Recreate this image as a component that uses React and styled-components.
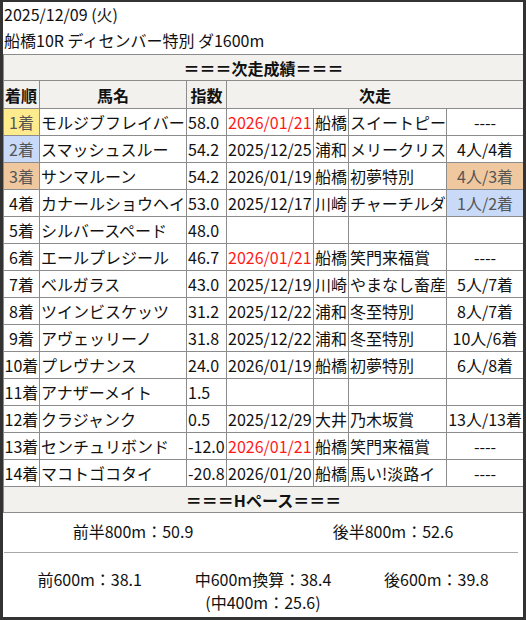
import React from 'react';
import styled, { createGlobalStyle } from 'styled-components';

const GlobalStyle = createGlobalStyle`
  html, body {
    margin: 0;
    padding: 0;
    background: #ffffff;
  }
  body {
    font-family: "Noto Sans CJK JP", "Noto Sans", sans-serif;
    color: #111;
  }
`;

const rows = [
  { rank: '1着', rankBg: '#fdeb8e', name: 'モルジブフレイバー', score: '58.0', date: '2026/01/21', red: true, track: '船橋', race: 'スイートピー', result: '----' },
  { rank: '2着', rankBg: '#c9daf8', name: 'スマッシュスルー', score: '54.2', date: '2025/12/25', track: '浦和', race: 'メリークリス', result: '4人/4着' },
  { rank: '3着', rankBg: '#efc8a0', name: 'サンマルーン', score: '54.2', date: '2026/01/19', track: '船橋', race: '初夢特別', result: '4人/3着', resultBg: '#efc8a0' },
  { rank: '4着', name: 'カナールショウヘイ', score: '53.0', date: '2025/12/17', track: '川崎', race: 'チャーチルダ', result: '1人/2着', resultBg: '#c9daf8' },
  { rank: '5着', name: 'シルバースペード', score: '48.0' },
  { rank: '6着', name: 'エールプレジール', score: '46.7', date: '2026/01/21', red: true, track: '船橋', race: '笑門来福賞', result: '----' },
  { rank: '7着', name: 'ベルガラス', score: '43.0', date: '2025/12/19', track: '川崎', race: 'やまなし畜産', result: '5人/7着' },
  { rank: '8着', name: 'ツインビスケッツ', score: '31.2', date: '2025/12/22', track: '浦和', race: '冬至特別', result: '8人/7着' },
  { rank: '9着', name: 'アヴェッリーノ', score: '31.8', date: '2025/12/22', track: '浦和', race: '冬至特別', result: '10人/6着' },
  { rank: '10着', name: 'プレヴナンス', score: '24.0', date: '2026/01/19', track: '船橋', race: '初夢特別', result: '6人/8着' },
  { rank: '11着', name: 'アナザーメイト', score: '1.5' },
  { rank: '12着', name: 'クラジャンク', score: '0.5', date: '2025/12/29', track: '大井', race: '乃木坂賞', result: '13人/13着' },
  { rank: '13着', name: 'センチュリボンド', score: '-12.0', date: '2026/01/21', red: true, track: '船橋', race: '笑門来福賞', result: '----' },
  { rank: '14着', name: 'マコトゴコタイ', score: '-20.8', date: '2026/01/20', track: '船橋', race: '馬い!淡路イ', result: '----' },
];

const colWidths = [36, 147, 40, 87, 35, 98, 77];

function App() {
  return (
    <>
      <GlobalStyle />
      <Frame>
        <RaceHead>
          <HeadLine>2025/12/09 (火)</HeadLine>
          <HeadLine>船橋10R ディセンバー特別 ダ1600m</HeadLine>
        </RaceHead>
        <Table>
          <colgroup>
            {colWidths.map((w, i) => (
              <col key={i} style={{ width: w }} />
            ))}
          </colgroup>
          <tbody>
            <tr>
              <TitleCell colSpan={7}>＝＝＝次走成績＝＝＝</TitleCell>
            </tr>
            <tr>
              <HeadCell $align="left">着順</HeadCell>
              <HeadCell>馬名</HeadCell>
              <HeadCell>指数</HeadCell>
              <HeadCell colSpan={4}>次走</HeadCell>
            </tr>
            {rows.map((r) => (
              <tr key={r.rank}>
                <RankCell $bg={r.rankBg}>{r.rank}</RankCell>
                <Cell>{r.name}</Cell>
                <Cell>{r.score}</Cell>
                <Cell $red={r.red}>{r.date}</Cell>
                <Cell>{r.track}</Cell>
                <Cell>{r.race}</Cell>
                <ResultCell $bg={r.resultBg}>{r.result}</ResultCell>
              </tr>
            ))}
            <tr>
              <TitleCell colSpan={7}>＝＝＝Hペース＝＝＝</TitleCell>
            </tr>
          </tbody>
        </Table>
        <Pace>
          <PaceRow $cols={2}>
            <PaceItem>前半800m：50.9</PaceItem>
            <PaceItem>後半800m：52.6</PaceItem>
          </PaceRow>
          <PaceRule />
          <PaceRow $cols={3} $tall>
            <PaceItem>前600m：38.1</PaceItem>
            <PaceItem>
              中600m換算：38.4
              <br />
              (中400m：25.6)
            </PaceItem>
            <PaceItem>後600m：39.8</PaceItem>
          </PaceRow>
        </Pace>
      </Frame>
    </>
  );
}

const Frame = styled.div`
  box-sizing: border-box;
  width: 526px;
  height: 620px;
  border: 3px solid #333333;
  border-top-width: 2px;
  background: #ffffff;
  overflow: hidden;
`;

const RaceHead = styled.div`
  padding: 0 0 0 1px;
  font-size: 16px;
`;

const HeadLine = styled.div`
  height: 26px;
  line-height: 25px;
  white-space: nowrap;
`;

const Table = styled.table`
  width: 520px;
  table-layout: fixed;
  border-collapse: collapse;
  font-size: 16px;
`;

const Cell = styled.td`
  border: 1px solid #8c8c8c;
  padding: 2px 1px;
  height: 22px;
  line-height: 22px;
  white-space: nowrap;
  overflow: hidden;
  text-align: left;
  color: ${(p) => (p.$red ? '#ff1a1a' : '#111')};
  background: #ffffff;
`;

const RankCell = styled(Cell)`
  text-align: center;
  padding: 2px 0;
  background: ${(p) => p.$bg || '#ffffff'};
  color: ${(p) => (p.$bg ? '#555' : '#111')};
`;

const ResultCell = styled(Cell)`
  text-align: center;
  background: ${(p) => p.$bg || '#ffffff'};
  color: ${(p) => (p.$bg ? '#555' : '#111')};
`;

const HeadCell = styled.th`
  border: 1px solid #8c8c8c;
  padding: 3px 1px 2px;
  height: 22px;
  line-height: 22px;
  font-weight: bold;
  text-align: ${(p) => p.$align || 'center'};
  background: #f2f1ed;
  white-space: nowrap;
`;

const TitleCell = styled(HeadCell)`
  padding: 2px 1px 1px;
`;

const Pace = styled.div`
  font-size: 16px;
`;

const PaceRow = styled.div`
  display: grid;
  grid-template-columns: repeat(${(p) => p.$cols}, 1fr);
  align-items: start;
  padding: ${(p) => (p.$tall ? '15px 0 0' : '7px 0 8px')};
  line-height: 23px;
  height: ${(p) => (p.$tall ? '48px' : '24px')};
`;

const PaceItem = styled.div`
  text-align: center;
  white-space: nowrap;
`;

const PaceRule = styled.div`
  height: 1px;
  margin: 0 5px 0 1px;
  background: #a8a8a8;
`;

export default App;
